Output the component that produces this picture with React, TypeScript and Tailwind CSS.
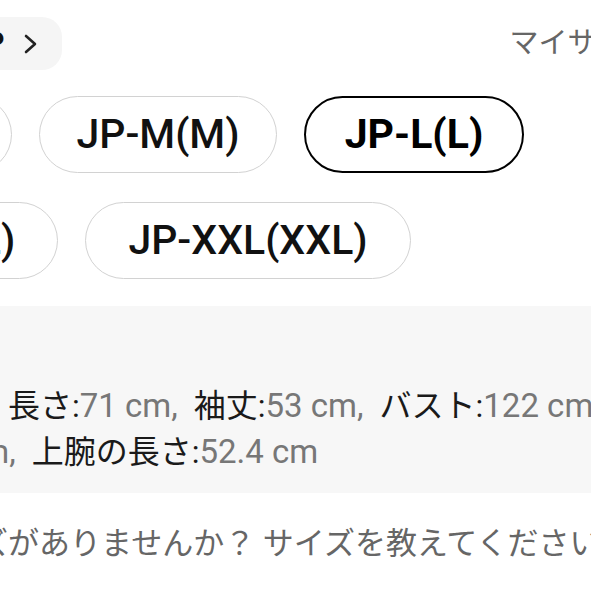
import React from 'react';

const sizes = [
    { label: 'JP-S(S)', w: 'w-[227px]', selected: false },
    { label: 'JP-M(M)', w: 'w-[238px]', selected: false },
    { label: 'JP-L(L)', w: 'w-[220px]', selected: true },
    { label: 'JP-XL(XL)', w: 'w-[273px]', selected: false },
    { label: 'JP-XXL(XXL)', w: 'w-[326px]', selected: false },
];

const font = "font-['Roboto','Noto_Sans_CJK_JP',sans-serif]";

function SizeChip({ label, w, selected }: { label: string; w: string; selected: boolean }) {
    return (
        <div
            className={`${w} h-[77px] shrink-0 rounded-full flex items-center justify-center whitespace-nowrap text-[41px] leading-none ${
                selected ? 'border-[2.5px] border-black font-bold text-black' : 'border border-[#d2d2d2] font-medium text-[#111]'
            }`}
        >
            {label}
        </div>
    );
}

function Label({ children, first }: { children: React.ReactNode; first?: boolean }) {
    return <span className={`text-[32px] text-[#1a1a1a] ${first ? '' : 'ml-[16px]'}`}>{children}</span>;
}

function Value({ children }: { children: React.ReactNode }) {
    return <span className="text-[33px] text-[#777]">{children}</span>;
}

export default function App() {
    return (
        <div className={`w-[591px] h-[591px] overflow-hidden bg-white ${font}`}>
            {/* header row */}
            <div className="pt-[17px] flex items-center">
                <div className="-ml-[40px] h-[53px] pl-[12px] pr-[25px] flex items-center bg-[#f5f5f5] rounded-r-[20px] shrink-0">
                    <span className="text-[27px] font-bold text-[#111] leading-none">JP</span>
                    <svg className="ml-[20px]" width="13" height="20" viewBox="0 0 13 20" fill="none">
                        <polyline points="2,2 11,10 2,18" stroke="#222" strokeWidth="2.6" strokeLinecap="round" strokeLinejoin="round" />
                    </svg>
                </div>
                <span className="ml-[447px] text-[29px] text-[#666] whitespace-nowrap leading-none">マイサイズ</span>
            </div>

            {/* size chips */}
            <div className="mt-[26px] -ml-[215px] w-[800px] flex flex-wrap gap-x-[27px] gap-y-[29px]">
                {sizes.map((s) => (
                    <SizeChip key={s.label} {...s} />
                ))}
            </div>

            {/* measurement panel */}
            <div className="mt-[27px] h-[187px] bg-[#f7f7f7] pt-[80px] leading-[40px] whitespace-nowrap">
                <div className="pl-[8px]">
                    <Label first>長さ:</Label>
                    <Value>71 cm,</Value>
                    <Label>袖丈:</Label>
                    <Value>53 cm,</Value>
                    <Label>バスト:</Label>
                    <Value>122 cm,</Value>
                </div>
                <div className="-ml-[37px]">
                    <Value>cm,</Value>
                    <Label>上腕の長さ:</Label>
                    <Value>52.4 cm</Value>
                </div>
            </div>

            <div className="mt-[30px] -ml-[84px] text-[31px] leading-[42px] text-[#666] whitespace-nowrap">
                サイズがありませんか？ サイズを教えてください
            </div>
        </div>
    );
}
